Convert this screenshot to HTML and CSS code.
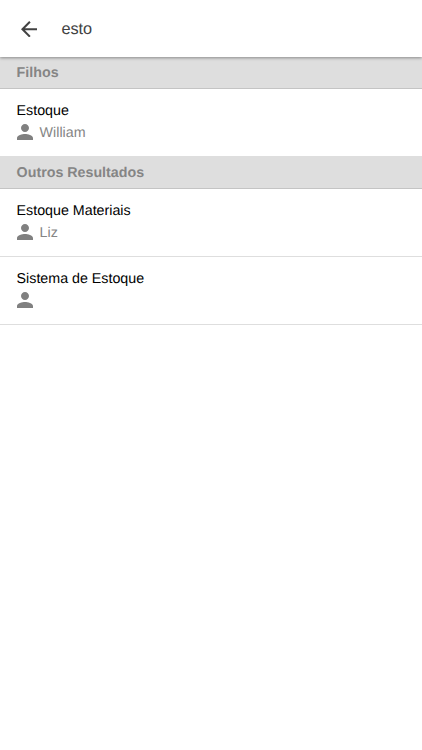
FILE: index.html
```html
<!DOCTYPE html>
<html lang="pt-BR">
<head>
    <meta charset="UTF-8">
    <meta name="viewport" content="width=device-width, initial-scale=1.0">
    <title>Busca</title>
    <link rel="stylesheet" href="styles.css">
</head>
<body>
    <svg class="sprite">
        <symbol id="person" viewBox="4 4 16 16">
            <path d="M12 12c2.21 0 4-1.79 4-4s-1.79-4-4-4-4 1.79-4 4 1.79 4 4 4zm0 2c-2.67 0-8 1.34-8 4v2h16v-2c0-2.66-5.33-4-8-4z"/>
        </symbol>
    </svg>

    <header class="search-bar">
        <button class="back" type="button" aria-label="Voltar">
            <svg viewBox="4 4 16 16"><path d="M20 11H7.83l5.59-5.59L12 4l-8 8 8 8 1.41-1.41L7.83 13H20v-2z"/></svg>
        </button>
        <input class="search-input" type="text" value="esto" aria-label="Busca">
    </header>

    <main class="results">
        <h2 class="divider">Filhos</h2>
        <div class="item last">
            <h3>Estoque</h3>
            <p><svg><use href="#person"/></svg><span>William</span></p>
        </div>

        <h2 class="divider">Outros Resultados</h2>
        <div class="item">
            <h3>Estoque Materiais</h3>
            <p><svg><use href="#person"/></svg><span>Liz</span></p>
        </div>
        <div class="item">
            <h3>Sistema de Estoque</h3>
            <p><svg><use href="#person"/></svg></p>
        </div>
    </main>
</body>
</html>
```

FILE: styles.css
```css
* {
    box-sizing: border-box;
    margin: 0;
    padding: 0;
}

body {
    font-family: "Liberation Sans", Arial, sans-serif;
    background-color: #fff;
    text-rendering: geometricPrecision;
}

.sprite {
    display: none;
}

.search-bar {
    position: relative;
    display: flex;
    align-items: center;
    height: 57px;
    padding: 1px 0 0 20.6px;
    background-color: #fff;
    box-shadow: 0 1px 3px rgba(0, 0, 0, 0.38);
}

.back {
    display: flex;
    border: none;
    background: none;
    cursor: pointer;
}

.back svg {
    width: 16.4px;
    height: 16.4px;
    fill: #424242;
}

.search-input {
    flex: 1;
    min-width: 0;
    margin-left: 24.4px;
    padding-top: 1px;
    border: none;
    outline: none;
    font-family: inherit;
    font-size: 16.3px;
    text-rendering: geometricPrecision;
    color: #424242;
}

.divider {
    height: 32px;
    padding-left: 16.6px;
    border-bottom: 1px solid #c4c4c4;
    background-color: #dedede;
    font-size: 14.25px;
    line-height: 33px;
    color: #858585;
}

.item {
    height: 68px;
    padding: 13px 16.6px 0;
    border-bottom: 1px solid #dedede;
}

.item.last {
    height: 67px;
    border-bottom: none;
}

.item.last + .divider {
    height: 33px;
    line-height: 34px;
}

.item h3 {
    font-size: 14.25px;
    font-weight: normal;
    line-height: 18px;
    color: #000;
}

.item p {
    display: flex;
    align-items: center;
    gap: 7px;
    height: 24px;
    font-size: 14.25px;
    color: #858585;
}

.item p span {
    padding-top: 2px;
}

.item svg {
    width: 16px;
    height: 16px;
    fill: #808080;
}
```
